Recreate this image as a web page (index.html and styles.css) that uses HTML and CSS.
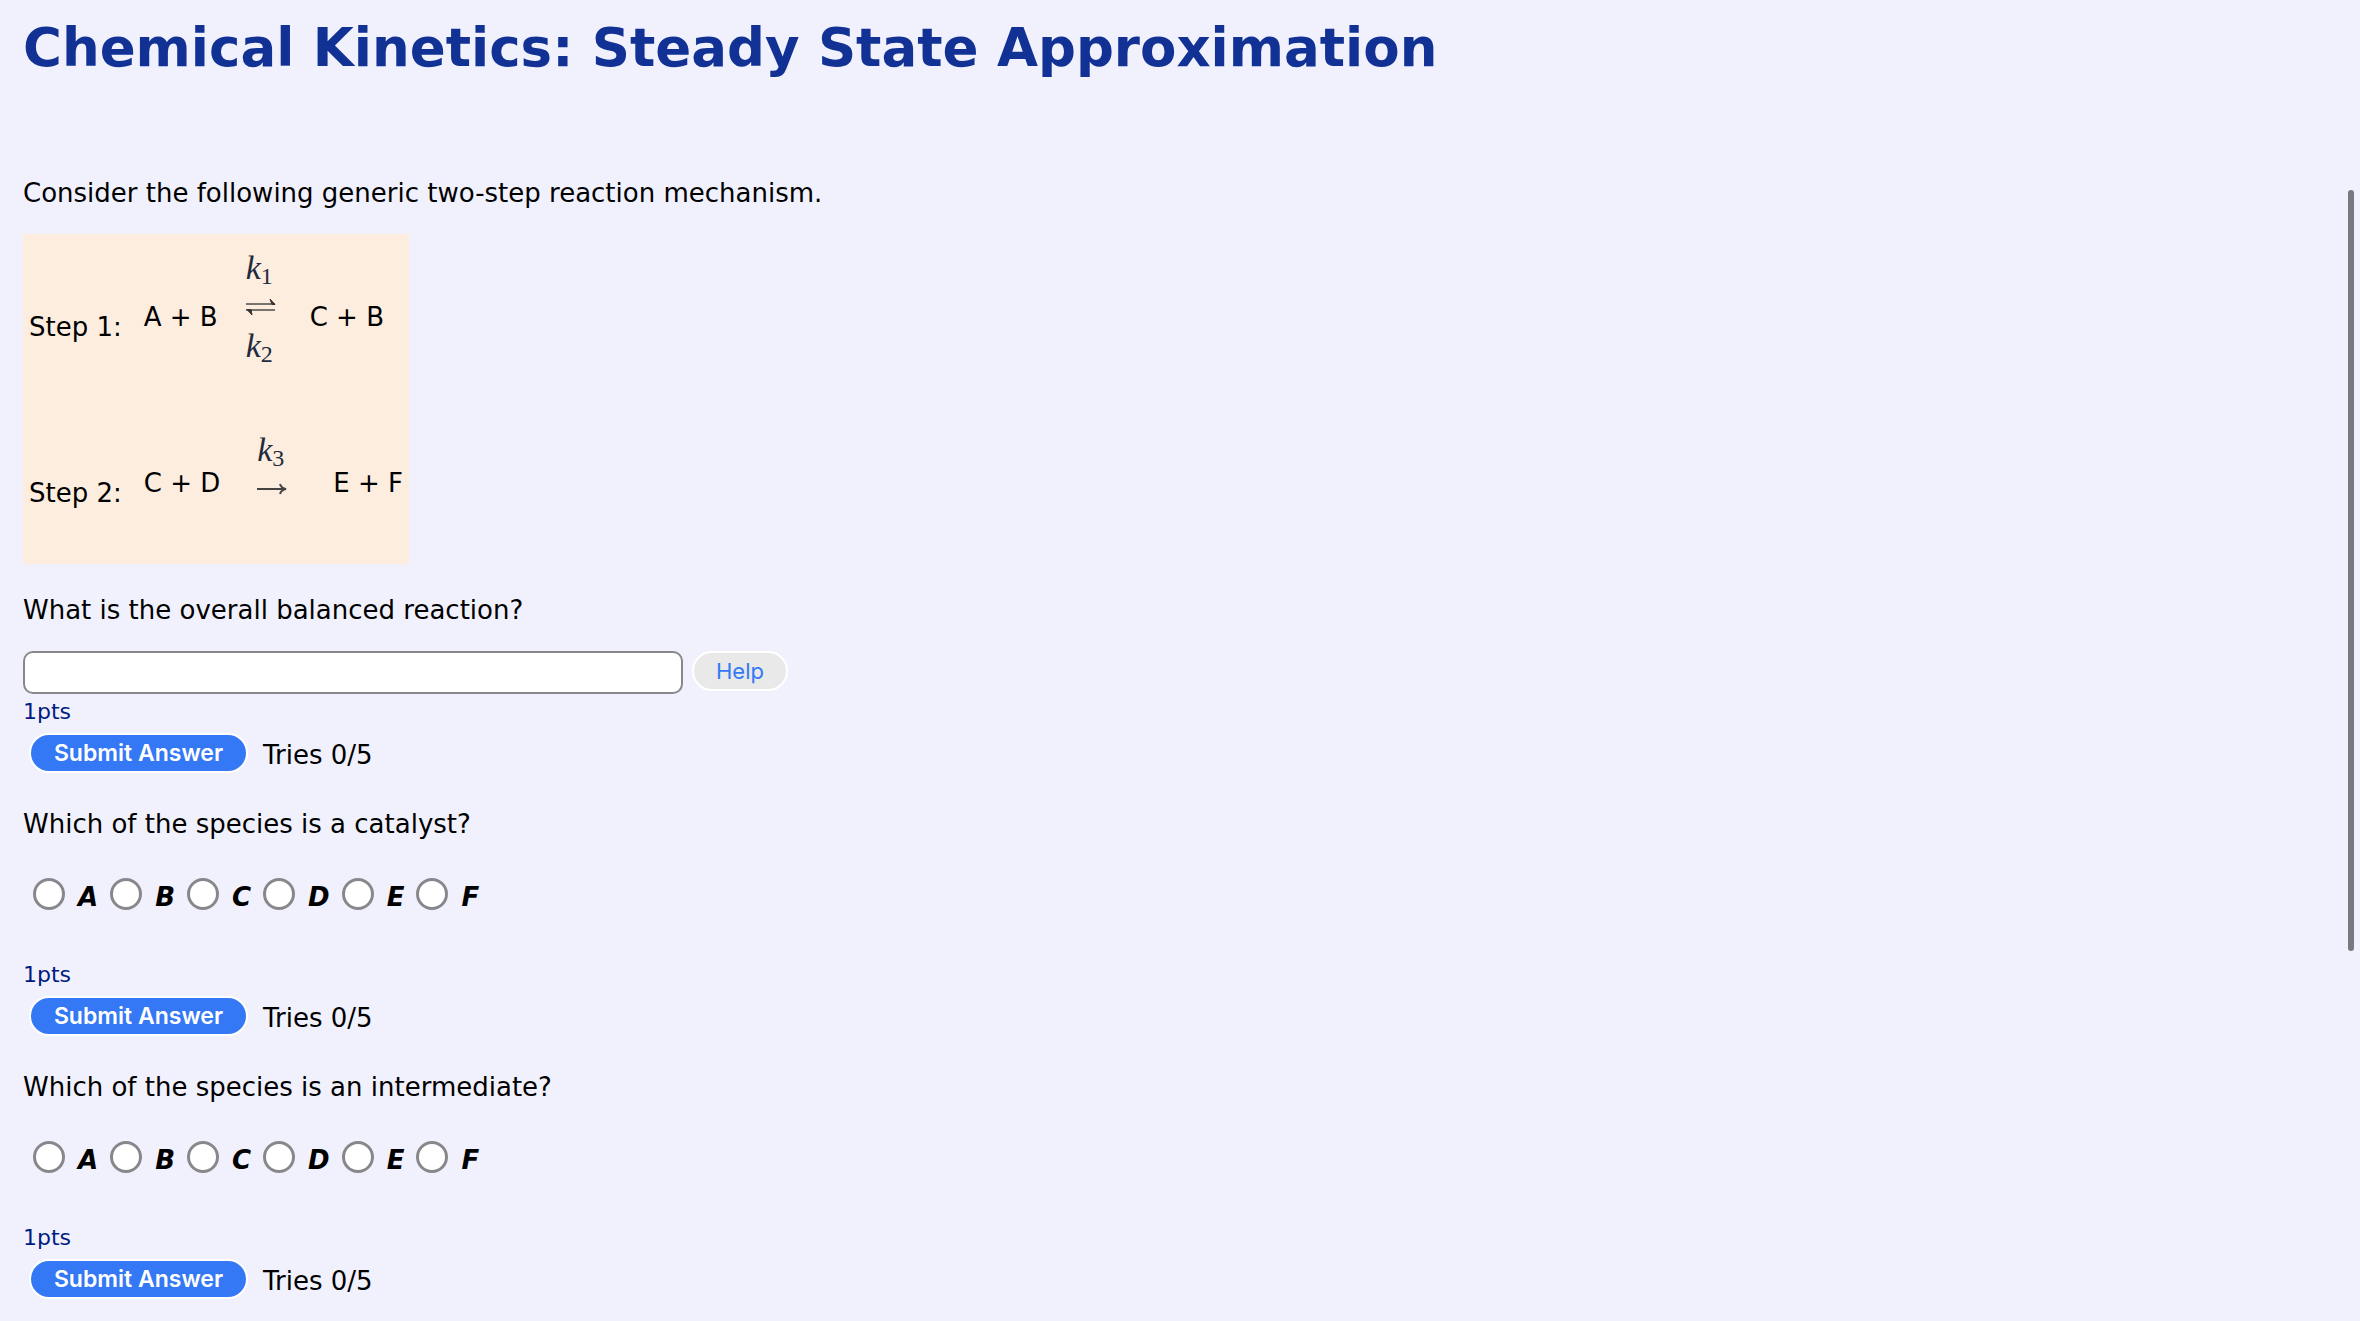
FILE: index.html
```html
<!DOCTYPE html>
<html lang="en">
<head>
    <meta charset="UTF-8">
    <meta name="viewport" content="width=device-width, initial-scale=1.0">
    <title>Chemical Kinetics: Steady State Approximation</title>
    <link rel="stylesheet" href="styles.css">
</head>
<body>
    <main class="page">
        <h1>Chemical Kinetics: Steady State Approximation</h1>

        <p class="intro">Consider the following generic two-step reaction mechanism.</p>

        <table class="mechanism">
            <tbody>
                <tr class="reversible">
                    <th scope="row">Step 1:</th>
                    <td>
                        <div class="equation">
                            <span class="species">A + B</span>
                            <div class="rates">
                                <div class="rate"><i>k</i><sub>1</sub></div>
                                <svg class="arrow" width="30" height="18" viewBox="0 0 30 18" aria-hidden="true">
                                    <path d="M0 6H29M0 12H29" stroke="#77736e" stroke-width="2"/>
                                    <path d="M24 1L29 6.5H26ZM6 17L1 11.5H5Z" fill="#333" stroke="#333"/>
                                </svg>
                                <div class="rate"><i>k</i><sub>2</sub></div>
                            </div>
                            <span class="species">C + B</span>
                        </div>
                    </td>
                </tr>
                <tr class="forward">
                    <th scope="row">Step 2:</th>
                    <td>
                        <div class="equation">
                            <span class="species">C + D</span>
                            <div class="rates">
                                <div class="rate"><i>k</i><sub>3</sub></div>
                                <svg class="arrow" width="30" height="18" viewBox="0 0 30 18" aria-hidden="true">
                                    <path d="M0 9H28M23 4Q24 8 29 9Q24 10 23 14" fill="none" stroke="#444" stroke-width="2"/>
                                </svg>
                            </div>
                            <span class="species">E + F</span>
                        </div>
                    </td>
                </tr>
            </tbody>
        </table>

        <form class="question">
            <label class="prompt" for="reaction">What is the overall balanced reaction?</label>
            <div class="answer">
                <input type="text" id="reaction" name="reaction">
                <button type="button" class="btn help">Help</button>
            </div>
            <div class="points">1pts</div>
            <div class="submit-row">
                <button type="submit" class="btn submit">Submit Answer</button>
                <span class="tries">Tries 0/5</span>
            </div>
        </form>

        <form class="question">
            <div class="prompt" id="catalyst">Which of the species is a catalyst?</div>
            <div class="options" role="radiogroup" aria-labelledby="catalyst">
                <label><input type="radio" name="catalyst" value="A">A</label>
                <label><input type="radio" name="catalyst" value="B">B</label>
                <label><input type="radio" name="catalyst" value="C">C</label>
                <label><input type="radio" name="catalyst" value="D">D</label>
                <label><input type="radio" name="catalyst" value="E">E</label>
                <label><input type="radio" name="catalyst" value="F">F</label>
            </div>
            <div class="points">1pts</div>
            <div class="submit-row">
                <button type="submit" class="btn submit">Submit Answer</button>
                <span class="tries">Tries 0/5</span>
            </div>
        </form>

        <form class="question">
            <div class="prompt" id="intermediate">Which of the species is an intermediate?</div>
            <div class="options" role="radiogroup" aria-labelledby="intermediate">
                <label><input type="radio" name="intermediate" value="A">A</label>
                <label><input type="radio" name="intermediate" value="B">B</label>
                <label><input type="radio" name="intermediate" value="C">C</label>
                <label><input type="radio" name="intermediate" value="D">D</label>
                <label><input type="radio" name="intermediate" value="E">E</label>
                <label><input type="radio" name="intermediate" value="F">F</label>
            </div>
            <div class="points">1pts</div>
            <div class="submit-row">
                <button type="submit" class="btn submit">Submit Answer</button>
                <span class="tries">Tries 0/5</span>
            </div>
        </form>
    </main>
    <div class="scroll-thumb"></div>
</body>
</html>
```
FILE: styles.css
```css
/* General Styles */
* {
    box-sizing: border-box;
}

body {
    margin: 0;
    background-color: #f1f1fd;
    color: #000;
    font-family: Verdana, "DejaVu Sans", sans-serif;
    font-size: 26px;
    line-height: 32px;
}

.page {
    padding: 16px 23px 0;
}

h1 {
    margin: 0 0 97px;
    color: #113294;
    font-size: 53px;
    line-height: 64px;
}

.intro {
    margin: 0 0 25px;
}

/* Reaction mechanism */
.mechanism {
    border-collapse: collapse;
    background-color: #fceddf;
}

.mechanism tr {
    height: 166px;
}

.mechanism tr:last-child {
    height: 164px;
}

.mechanism th,
.mechanism td {
    padding: 0 6px;
    vertical-align: top;
    white-space: nowrap;
}

.mechanism th {
    padding-top: 77px;
    padding-right: 16px;
    font-weight: normal;
    text-align: left;
}

.equation {
    display: flex;
    align-items: flex-start;
}

.species {
    padding-top: 67px;
}

.rates {
    display: flex;
    flex-direction: column;
    gap: 10px;
    padding: 14px 34px 0 28px;
}

.forward .rates {
    padding: 30px 46px 0 37px;
}

.rate {
    color: #222b3c;
    font-family: "Liberation Serif", serif;
    font-size: 34px;
    line-height: 40px;
}

.rate sub {
    font-size: 24px;
    line-height: 0;
    vertical-align: -5px;
}

.arrow {
    display: block;
}

/* Questions */
.question {
    margin-top: 30px;
}

.prompt {
    display: block;
}

.answer {
    display: flex;
    align-items: flex-start;
    gap: 9px;
    margin: 25px 0 3px;
}

.answer input {
    width: 660px;
    height: 43px;
    padding: 4px 8px;
    border: 2px solid #88888c;
    border-radius: 10px;
    background-color: #fff;
    font: inherit;
}

.options {
    display: flex;
    gap: 12px;
    height: 32px;
    margin: 38px 0 50px 10px;
    font-style: italic;
    font-weight: bold;
}

.options label {
    display: flex;
    gap: 13px;
    padding-top: 3px;
}

.options input {
    appearance: none;
    width: 32px;
    height: 32px;
    margin: -3px 0 0;
    border: 3px solid #88888c;
    border-radius: 50%;
    background-color: #fff;
}

.points {
    color: #001b80;
    font-size: 22px;
    line-height: 30px;
}

.submit-row {
    display: flex;
    align-items: flex-start;
    gap: 15px;
    height: 51px;
    padding: 6px 0 0 6px;
}

.tries {
    padding-top: 6px;
}

/* Buttons */
.btn {
    height: 40px;
    padding: 0;
    border: 2px solid #fff;
    border-radius: 20px;
    font-family: Inter, sans-serif;
    font-size: 22px;
}

.help {
    width: 96px;
    background-color: #e9e9e9;
    color: #3478f6;
}

.submit {
    width: 219px;
    background-color: #3478f6;
    color: #fff;
    font-size: 23px;
    font-weight: 600;
}

/* Overlay scroll bar */
.scroll-thumb {
    position: fixed;
    top: 190px;
    right: 6px;
    width: 6px;
    height: 761px;
    border-radius: 3px;
    background-color: #78787e;
}
```
